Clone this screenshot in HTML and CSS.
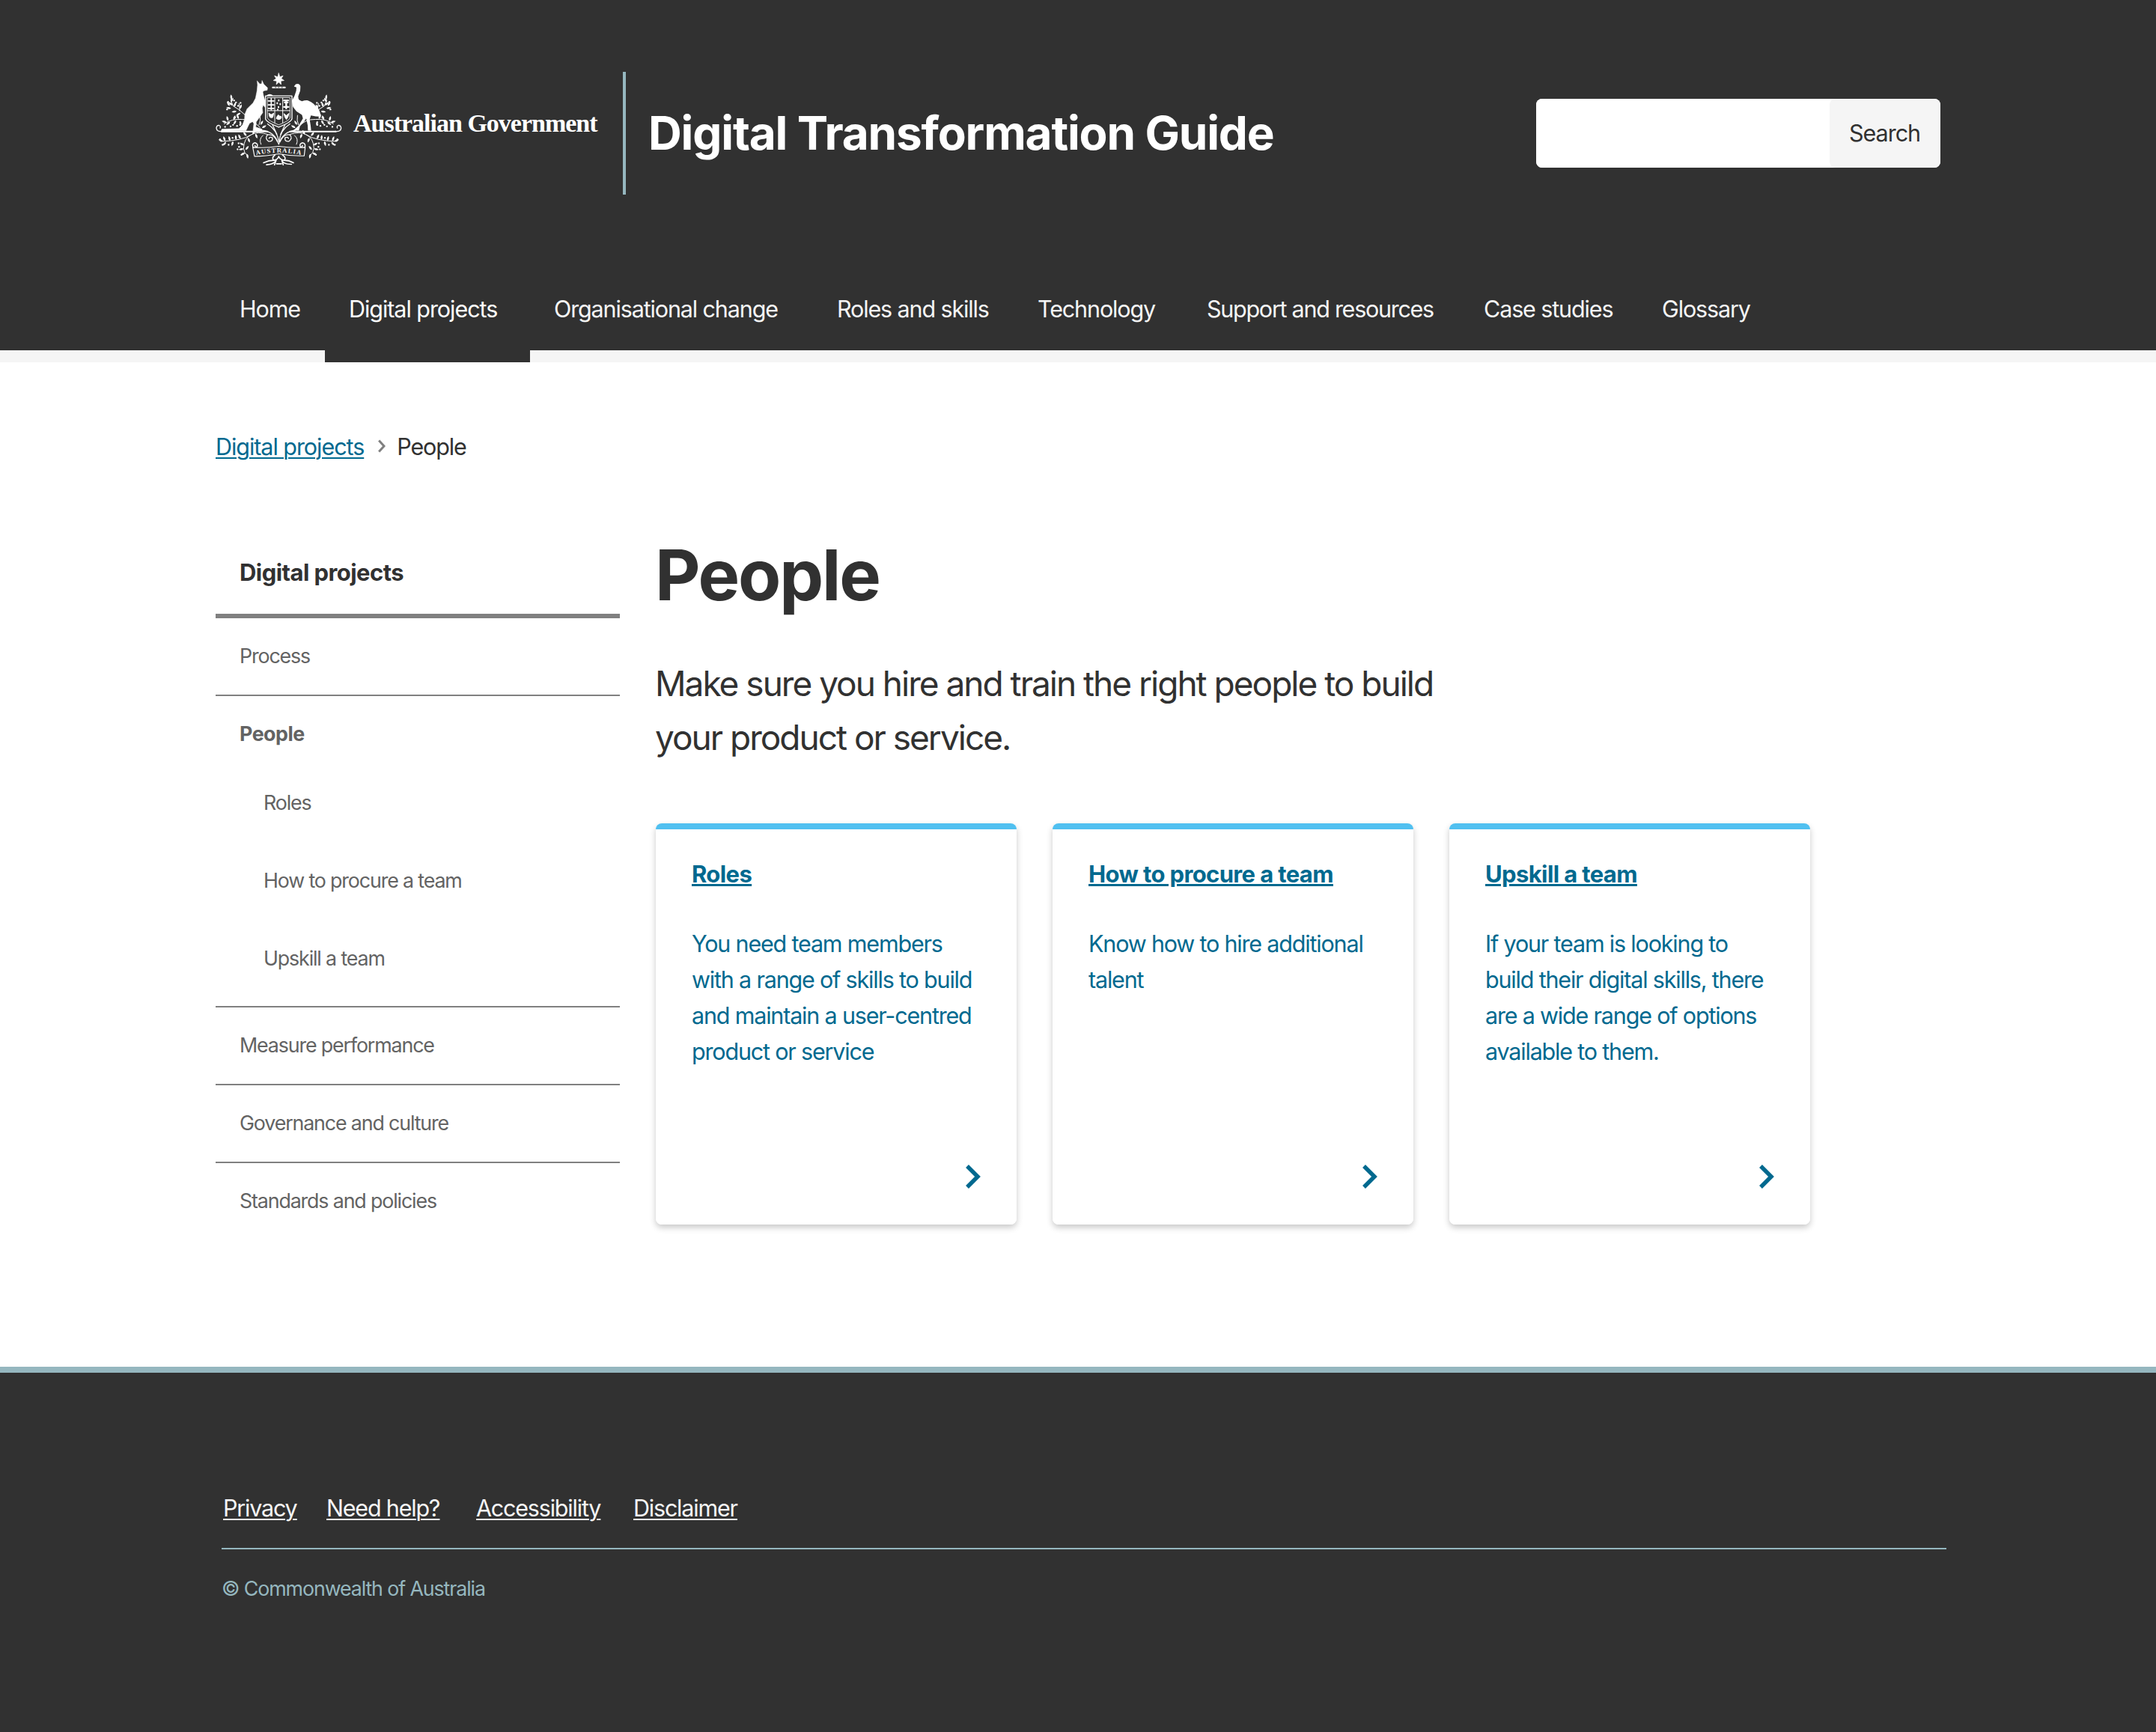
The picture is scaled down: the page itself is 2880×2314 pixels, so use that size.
FILE: index.html
```html
<!DOCTYPE html>
<html lang="en">
<head>
<meta charset="utf-8">
<title>People – Digital Transformation Guide</title>
<link rel="stylesheet" href="styles.css">
</head>
<body>
<header class="header">
  <div class="header-main">
    <div class="brand">
      <div class="gov">
        <svg class="crest" viewBox="54 50 510 380" fill="none" stroke="#fff" stroke-linecap="round" stroke-linejoin="round">
          <defs>
            <path id="leaf" d="M0 0Q-8 -8 0 -20Q8 -8 0 0Z" fill="#fff" stroke="none"/>
            <g id="upper-spray">
              <path d="M172 222Q150 200 124 186Q112 168 117 146M150 206Q152 190 148 176M232 272Q200 238 160 240Q120 236 88 258M228 262Q236 244 232 224" stroke-width="3"/>
              <use href="#leaf" transform="translate(118 160) rotate(-8)"/>
              <use href="#leaf" transform="translate(114 170) rotate(35)"/>
              <use href="#leaf" transform="translate(122 184) rotate(-50)"/>
              <use href="#leaf" transform="translate(116 196) rotate(-80)"/>
              <use href="#leaf" transform="translate(128 190) rotate(20)"/>
              <use href="#leaf" transform="translate(138 208) rotate(-95)"/>
              <use href="#leaf" transform="translate(150 198) rotate(25)"/>
              <use href="#leaf" transform="translate(154 214) rotate(-120)"/>
              <use href="#leaf" transform="translate(110 186) rotate(-30)"/>
              <use href="#leaf" transform="translate(104 246) rotate(-15)"/>
              <use href="#leaf" transform="translate(98 252) rotate(-75)"/>
              <use href="#leaf" transform="translate(112 250) rotate(-130)"/>
              <use href="#leaf" transform="translate(126 242) rotate(20)"/>
              <use href="#leaf" transform="translate(136 244) rotate(-150)"/>
              <use href="#leaf" transform="translate(146 238) rotate(-20)"/>
              <use href="#leaf" transform="translate(152 246) rotate(170)"/>
              <use href="#leaf" transform="translate(234 262) rotate(30)"/>
              <use href="#leaf" transform="translate(240 274) rotate(60)"/>
              <g fill="#fff" stroke="none">
                <circle cx="104" cy="170" r="3.500"/><circle cx="136" cy="172" r="3.500"/><circle cx="128" cy="164" r="3.500"/><circle cx="100" cy="200" r="3.500"/><circle cx="154" cy="174" r="3.500"/><circle cx="144" cy="186" r="3.500"/>
                <circle cx="92" cy="270" r="3.500"/><circle cx="114" cy="268" r="3.500"/><circle cx="124" cy="262" r="3.500"/><circle cx="140" cy="266" r="3.500"/><circle cx="152" cy="262" r="3.500"/><circle cx="132" cy="232" r="3.500"/>
              </g>
            </g>
            <g id="lower-spray">
              <path d="M262 300Q222 286 196 302Q168 314 166 356Q168 374 180 384M196 302Q160 326 76 328M244 304Q226 318 236 340" stroke-width="3"/>
              <use href="#leaf" transform="translate(84 328) rotate(-70)"/>
              <use href="#leaf" transform="translate(92 326) rotate(-20)"/>
              <use href="#leaf" transform="translate(96 330) rotate(-140)"/>
              <use href="#leaf" transform="translate(112 326) rotate(-15)"/>
              <use href="#leaf" transform="translate(124 328) rotate(-165)"/>
              <use href="#leaf" transform="translate(136 322) rotate(-5)"/>
              <use href="#leaf" transform="translate(154 318) rotate(-25)"/>
              <use href="#leaf" transform="translate(178 306) rotate(-40)"/>
              <use href="#leaf" transform="translate(184 314) rotate(160)"/>
              <use href="#leaf" transform="translate(202 300) rotate(30)"/>
              <use href="#leaf" transform="translate(214 298) rotate(160)"/>
              <use href="#leaf" transform="translate(168 344) rotate(-60)"/>
              <use href="#leaf" transform="translate(166 358) rotate(-100)"/>
              <use href="#leaf" transform="translate(172 374) rotate(-115)"/>
              <use href="#leaf" transform="translate(180 378) rotate(170)"/>
              <use href="#leaf" transform="translate(174 362) rotate(40)"/>
              <g fill="#fff" stroke="none">
                <circle cx="72" cy="320" r="3.500"/><circle cx="82" cy="342" r="3.500"/><circle cx="106" cy="342" r="3.500"/><circle cx="122" cy="314" r="3.500"/><circle cx="146" cy="336" r="3.500"/><circle cx="148" cy="350" r="3.500"/><circle cx="142" cy="360" r="3.500"/><circle cx="158" cy="382" r="3.500"/>
              </g>
            </g>
          </defs>

          <path d="M307 55L311.500 69.500L324.200 65.300L317.200 76.500L328.500 84L315.500 86.500L316.500 100.500L307 91L297.500 100.500L298.500 86.500L285.500 84L296.800 76.500L289.800 65.300L302.500 69.500Z" fill="#fff" stroke-width="2"/>
          <rect x="280" y="108.500" width="55" height="7" rx="3" fill="#fff" stroke="none"/>
          <path d="M293 112H297M305 112H309M318 112H322" stroke="#313131" stroke-width="3"/>

          <use href="#upper-spray"/>
          <use href="#upper-spray" transform="translate(614 0) scale(-1 1)"/>
          <use href="#lower-spray"/>
          <use href="#lower-spray" transform="translate(614 0) scale(-1 1)"/>

          <path d="M221 86L231 98L239 97L240 84L247 99L262 113L261 123L248 125L243 130L246 145L252 165L259 182L254 194L245 182L241 195L243 213L230 232L217 250L215 271L240 279V287L204 286L207 258L204 248L190 256L184 268L176 285L76 287L79 279L148 277L162 262L170 240L171 220L180 198L204 174L214 155L220 125L222 103Z" fill="#fff" stroke-width="1.500"/>
          <path d="M258 148Q260 139 272 139Q282 140 284 147Z" fill="#fff" stroke="none"/>
          <path d="M368 108L375 99Q381 96 387 98Q394 102 394 108L393 125L385 148Q385 158 389 162L400 167Q412 163 424 164Q438 169 446 177L468 200Q475 214 475 229L455 228L436 224L431 240L435 266L437 286L424 285L423 264L417 236L408 250L392 268L388 285L365 284L386 266L404 236L400 222L378 208L364 190L360 165L370 146L377 125L378 112Z" fill="#fff" stroke="none"/>

          <path d="M254 146H360V238Q356 252 307 271Q258 252 254 238Z" fill="#313131" stroke-width="4"/>
          <path d="M262 153H352V235Q348 246 307 262Q266 246 262 235Z" stroke-width="2.500"/>
          <path d="M291 153V254M323 153V254M262 205H352" stroke-width="3"/>
          <path d="M277 156V202M265 166H288M265 182H288M265 196H288" stroke-width="5"/>
          <path d="M307 163V165M301 174V176M313 178V180M306 190V192M303 200V201" stroke-width="6"/>
          <path d="M328 164H345M331 172H343M328 190H346M337 164V196" stroke-width="7"/>
          <path d="M268 216Q270 234 277 232Q284 236 286 216L277 222Z" fill="#fff" stroke-width="4"/>
          <path d="M298 236Q308 246 318 234Q318 224 312 228L306 222Q300 224 298 236Z" fill="#fff" stroke-width="3"/>
          <path d="M328 218Q332 236 338 240Q346 230 348 216L338 224Z" fill="#fff" stroke-width="3"/>

          <path d="M78 289H262M352 289H536" stroke-width="6"/>
          <path d="M80 288Q58 290 57 275Q58 263 68 264Q76 267 72 275M534 288Q556 290 557 275Q556 263 546 264Q538 267 542 275" stroke-width="4"/>
          <path d="M240 284Q290 288 307 340Q324 288 374 284M262 258Q300 282 308 330Q314 282 352 258M282 262L300 300M332 262L314 300" stroke-width="3.500"/>
          <path d="M302 330Q286 296 262 302Q250 316 266 328Q284 330 282 314Q272 308 268 316M312 330Q328 296 352 302Q364 316 348 328Q330 330 332 314Q342 308 346 316" stroke-width="4"/>

          <path d="M203 352Q254 356 307 348Q360 356 413 352L409 386Q360 388 307 378Q254 388 210 388Z" fill="#313131" stroke-width="3.500"/>
          <path d="M204 352Q198 336 212 334Q226 338 220 350Q212 352 212 344M412 352Q416 336 402 334Q388 338 394 350Q402 352 402 344" stroke-width="4.500"/>
          <path id="ribbon" d="M217 383Q306 363 400 383" stroke="none"/>
          <text class="crest-text"><textPath href="#ribbon" textLength="180">AUSTRALIA</textPath></text>
          <path d="M292 382Q276 396 288 404Q304 400 307 388Q310 400 328 404Q340 396 322 382M288 404Q268 404 246 414M328 404Q348 404 366 414M296 404Q290 420 258 422M320 404Q324 420 358 420M290 422L298 400M325 422L318 400M298 418H318" stroke-width="5"/>
        </svg>
        <span class="gov-name">Australian Government</span>
      </div>
      <span class="site-title">Digital Transformation Guide</span>
    </div>
    <form class="search">
      <input class="search-input" type="text" aria-label="Search">
      <button class="search-button" type="button">Search</button>
    </form>
  </div>
  <nav class="nav">
    <a class="nav-item">Home</a>
    <a class="nav-item nav-item-active">Digital projects</a>
    <a class="nav-item">Organisational change</a>
    <a class="nav-item">Roles and skills</a>
    <a class="nav-item">Technology</a>
    <a class="nav-item nav-item-long">Support and resources</a>
    <a class="nav-item">Case studies</a>
    <a class="nav-item">Glossary</a>
  </nav>
</header>

<main class="main">
  <div class="breadcrumb">
    <a class="breadcrumb-link">Digital projects</a>
    <svg class="breadcrumb-arrow" viewBox="0 0 10 18" fill="none" stroke="#808080" stroke-width="3"><path d="M1.200 1.500L8 9L1.200 16.500"/></svg>
    <span>People</span>
  </div>

  <div class="columns">
    <aside class="side">
      <div class="side-title">Digital projects</div>
      <ul class="side-list">
        <li class="side-item"><a class="side-link">Process</a></li>
        <li class="side-item">
          <a class="side-link side-link-current">People</a>
          <ul class="side-sublist">
            <li class="side-subitem">Roles</li>
            <li class="side-subitem">How to procure a team</li>
            <li class="side-subitem">Upskill a team</li>
          </ul>
        </li>
        <li class="side-item"><a class="side-link">Measure performance</a></li>
        <li class="side-item"><a class="side-link">Governance and culture</a></li>
        <li class="side-item"><a class="side-link">Standards and policies</a></li>
      </ul>
    </aside>

    <section class="content">
      <h1 class="heading">People</h1>
      <p class="lead">Make sure you hire and train the right people to build your product or service.</p>
      <div class="cards">
        <article class="card">
          <h2 class="card-title">Roles</h2>
          <p class="card-text">You need team members with a range of skills to build and maintain a user-centred product or service</p>
          <svg class="card-arrow" viewBox="0 0 20 32" fill="none" stroke="#00698f" stroke-width="5.500"><path d="M2 2L16 16L2 30"/></svg>
        </article>
        <article class="card">
          <h2 class="card-title">How to procure a team</h2>
          <p class="card-text">Know how to hire additional talent</p>
          <svg class="card-arrow" viewBox="0 0 20 32" fill="none" stroke="#00698f" stroke-width="5.500"><path d="M2 2L16 16L2 30"/></svg>
        </article>
        <article class="card">
          <h2 class="card-title">Upskill a team</h2>
          <p class="card-text">If your team is looking to build their digital skills, there are a wide range of options available to them.</p>
          <svg class="card-arrow" viewBox="0 0 20 32" fill="none" stroke="#00698f" stroke-width="5.500"><path d="M2 2L16 16L2 30"/></svg>
        </article>
      </div>
    </section>
  </div>
</main>

<footer class="footer">
  <div class="footer-links">
    <a>Privacy</a>
    <a>Need help?</a>
    <a>Accessibility</a>
    <a>Disclaimer</a>
  </div>
  <div class="copyright">© Commonwealth of Australia</div>
</footer>
</body>
</html>
```
FILE: styles.css
```css
* {
  box-sizing: border-box;
}

body {
  margin: 0;
  background: #fff;
  color: #313131;
  font-family: Inter, "Liberation Sans", sans-serif;
  font-size: 30.5px;
  line-height: 48px;
  letter-spacing: -1.13px;
}

h1, h2, p, ul {
  margin: 0;
  padding: 0;
}

ul {
  list-style: none;
}

/* Header */
.header {
  height: 484px;
  background: #313131;
  border-bottom: 16px solid #f5f5f5;
  color: #f5f5f5;
}

.header-main {
  display: flex;
  justify-content: space-between;
  height: 356px;
  padding: 96px 288px 0;
}

.brand {
  display: flex;
  height: 164px;
}

.gov {
  display: flex;
  width: 548px;
  border-right: 4px solid #95b7bf;
}

.crest {
  width: 170px;
  height: 127px;
}

.crest-text {
  fill: #fff;
  stroke: none;
  font: bold 26px "Liberation Serif", serif;
  letter-spacing: 0;
}

.gov-name {
  margin: 45px 0 0 14px;
  color: #fff;
  font: bold 34px/48px "Liberation Serif", serif;
  letter-spacing: -1px;
  white-space: nowrap;
}

.site-title {
  margin-left: 30px;
  color: #fff;
  font-size: 62px;
  font-weight: 700;
  line-height: 164px;
  letter-spacing: -1.16px;
  white-space: nowrap;
}

.search {
  display: flex;
  width: 540px;
  height: 92px;
  margin-top: 36px;
  border-radius: 8px;
  background: #fff;
}

.search-input {
  flex: 1;
  min-width: 0;
  border: 0;
  border-radius: 8px;
  background: #fff;
  font: inherit;
}

.search-button {
  width: 148px;
  padding: 0 1px 0 0;
  border: 0;
  border-radius: 8px;
  background: #f5f5f5;
  color: #313131;
  font: inherit;
  letter-spacing: -1px;
}

.nav {
  display: grid;
  grid-template-columns: 146px 274px 378px 268px 226px 370px 238px auto;
  padding: 0 288px;
}

.nav-item {
  height: 112px;
  padding: 33px 0 0 32px;
  white-space: nowrap;
}

.nav-item-long {
  letter-spacing: -1.27px;
}

.nav-item-active {
  height: 128px;
  margin-bottom: -16px;
  background: #313131;
  color: #fff;
  letter-spacing: -1.05px;
}

/* Page body */
.main {
  height: 1342px;
  padding: 89px 288px 0;
}

.breadcrumb {
  display: flex;
  align-items: center;
}

.breadcrumb-link {
  margin-right: 19px;
  color: #00698f;
  letter-spacing: -1.05px;
  text-decoration: underline 2px;
  text-underline-offset: 3px;
}

.breadcrumb-arrow {
  width: 10px;
  height: 18px;
  margin: 0 15px 2px 0;
}

.columns {
  display: grid;
  grid-template-columns: 540px 1fr;
  column-gap: 48px;
  margin-top: 88px;
}

.side {
  color: #636363;
  font-size: 26.8px;
  line-height: 42px;
  letter-spacing: -1.14px;
}

.side-title {
  padding: 32px 32px 31px;
  border-bottom: 6px solid #808080;
  color: #313131;
  font-size: 31px;
  font-weight: 700;
  line-height: 48px;
  letter-spacing: -0.56px;
}

.side-item + .side-item {
  border-top: 2px solid #808080;
}

.side-link {
  display: block;
  padding: 29px 32px 31px;
}

.side-link-current {
  padding-bottom: 19px;
  font-weight: 700;
  letter-spacing: -0.5px;
}

.side-sublist {
  padding: 0 0 12px 64px;
}

.side-subitem {
  height: 104px;
  padding-top: 31px;
}

.heading {
  margin-left: -1px;
  font-size: 93.5px;
  font-weight: 700;
  line-height: 118px;
  letter-spacing: -2.2px;
}

.lead {
  width: 1080px;
  margin: 50px 0 0 -1px;
  font-size: 46px;
  line-height: 72px;
  letter-spacing: -2px;
}

.cards {
  display: grid;
  grid-template-columns: repeat(3, 482px);
  gap: 48px;
  margin-top: 79px;
}

.card {
  display: flex;
  flex-direction: column;
  height: 536px;
  padding: 44px 46px 48px 48px;
  border-radius: 8px;
  background: linear-gradient(#50c0f0 8px, #fff 8px);
  box-shadow: 0 4px 8px rgba(0, 0, 0, 0.22);
  color: #00698f;
}

.card-title {
  font-size: 31px;
  font-weight: 700;
  letter-spacing: -0.62px;
  text-decoration: underline 3px;
  text-underline-offset: 2px;
}

.card-text {
  margin-top: 45px;
  letter-spacing: -1.18px;
}

.card-arrow {
  width: 20px;
  height: 32px;
  margin: auto 2px 0 auto;
}

/* Footer */
.footer {
  height: 488px;
  padding: 157px 280px 0 296px;
  border-top: 8px solid #95b7bf;
  background: #313131;
  color: #f5f5f5;
}

.footer-links {
  display: grid;
  grid-template-columns: 138px 200px 210px auto;
  justify-content: start;
  padding: 0 0 29px 2px;
  text-decoration: underline 2px;
  text-underline-offset: 3px;
}

.footer-links a {
  justify-self: start;
  letter-spacing: -1.2px;
  text-decoration: inherit;
}

.copyright {
  padding-top: 28px;
  border-top: 2px solid #95b7bf;
  color: #95b7bf;
  font-size: 26.8px;
  letter-spacing: -1.11px;
}
```
